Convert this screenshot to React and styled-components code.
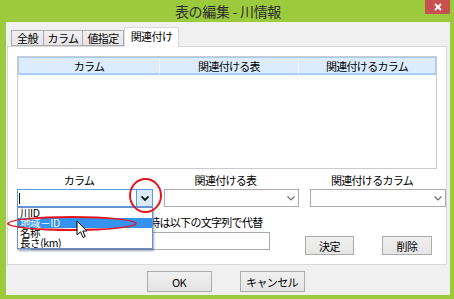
import React from "react";
import styled, { createGlobalStyle } from "styled-components";

const GlobalStyle = createGlobalStyle`
  html, body {
    margin: 0;
    padding: 0;
    background: #9bcb3c;
  }
  body {
    font-family: "Noto Sans CJK JP", "Liberation Sans", sans-serif;
    font-size: 11px;
    color: #000;
  }
`;

const Window = styled.div`
  position: relative;
  width: 454px;
  height: 299px;
  background: #9bcb3c;
  display: flex;
  flex-direction: column;
  overflow: hidden;
`;

const TitleBar = styled.div`
  height: 22px;
  display: flex;
  align-items: center;
  justify-content: center;
  position: relative;
`;

const Title = styled.div`
  font-size: 14px;
  color: #2d2d2d;
  letter-spacing: -0.3px;
  margin-left: 2px;
`;

const CloseButton = styled.div`
  position: absolute;
  top: 0;
  right: 4px;
  width: 25px;
  height: 14px;
  background: #c75050;
  display: flex;
  align-items: center;
  justify-content: center;
`;

const Client = styled.div`
  flex: 1;
  margin: 0 4px 4px 6px;
  padding: 0 3px 0 1px;
  background: #f0f0f0;
  display: flex;
  flex-direction: column;
`;

const TabStrip = styled.div`
  height: 19px;
  margin-top: 5px;
  padding-left: 4px;
  display: flex;
  align-items: flex-end;
  position: relative;
  z-index: 1;
`;

const Tab = styled.div`
  width: ${(p) => p.$w}px;
  height: ${(p) => (p.$active ? 20 : 16)}px;
  box-sizing: border-box;
  border: 1px solid ${(p) => (p.$active ? "#d9d9d9" : "#acacac")};
  border-bottom: ${(p) => (p.$active ? "none" : "1px solid #acacac")};
  border-left-width: ${(p) => (p.$first || p.$active ? 1 : 0)}px;
  background: ${(p) =>
    p.$active ? "#fff" : "linear-gradient(#f0f0f0, #e5e5e5)"};
  margin-bottom: ${(p) => (p.$active ? -1 : 0)}px;
  display: flex;
  align-items: center;
  justify-content: center;
  font-size: 11px;
  letter-spacing: -0.6px;
  padding-bottom: ${(p) => (p.$active ? 3 : 0)}px;
`;

const Panel = styled.div`
  height: 219px;
  box-sizing: border-box;
  background: #fff;
  border: 1px solid #d9d9d9;
  padding: 9px 0 0 9px;
  display: flex;
  flex-direction: column;
`;

const ListView = styled.div`
  width: 420px;
  height: 113px;
  box-sizing: border-box;
  border: 1px solid #c9cbd0;
  background: #fff;
`;

const ListHeader = styled.div`
  display: grid;
  grid-template-columns: 140px 139px 1fr;
  height: 18px;
  box-sizing: border-box;
  background: #dcecfd;
  border: 1px solid #a7cdf3;
  border-bottom-width: 2px;
`;

const HeaderCell = styled.div`
  display: flex;
  align-items: center;
  justify-content: center;
  font-size: 11px;
  letter-spacing: -0.7px;
  border-left: ${(p) => (p.$first ? "none" : "1px solid #f2f7fd")};
`;

const FieldGrid = styled.div`
  display: grid;
  grid-template-columns: 136px 135px 136px;
  column-gap: 11px;
  row-gap: 2px;
  margin-top: 5px;
`;

const FieldLabel = styled.div`
  height: 13px;
  line-height: 13px;
  text-align: center;
  padding-right: 12px;
  font-size: 11px;
  letter-spacing: -0.7px;
`;

const Combo = styled.div`
  height: 18px;
  box-sizing: border-box;
  border: 1px solid ${(p) => (p.$focus ? "#569de5" : "#acacac")};
  background: #fff;
  display: flex;
  align-items: stretch;
`;

const ComboText = styled.div`
  flex: 1;
  display: flex;
  align-items: center;
  padding-left: 1px;
`;

const Caret = styled.div`
  width: 1px;
  height: 11px;
  background: #000;
`;

const ComboArrow = styled.div`
  width: 15px;
  display: flex;
  align-items: center;
  justify-content: center;
  background: ${(p) => (p.$focus ? "#dbeaf9" : "transparent")};
  border-left: 1px solid ${(p) => (p.$focus ? "#569de5" : "transparent")};
`;

const CheckRow = styled.div`
  margin-top: 8px;
  height: 13px;
  display: flex;
  align-items: center;
  gap: 4px;
  padding-left: 76px;
  font-size: 11px;
  letter-spacing: -0.7px;
`;

const CheckBox = styled.div`
  width: 11px;
  height: 11px;
  box-sizing: border-box;
  border: 1px solid #707070;
  background: #fff;
`;

const EditRow = styled.div`
  margin-top: 4px;
  display: flex;
  align-items: flex-start;
  padding-left: 14px;
`;

const TextBox = styled.div`
  width: 239px;
  height: 18px;
  box-sizing: border-box;
  border: 1px solid #acacac;
  background: #fff;
`;

const Button = styled.div`
  width: ${(p) => p.$w}px;
  height: ${(p) => p.$h}px;
  box-sizing: border-box;
  border: 1px solid #acacac;
  background: linear-gradient(#f0f0f0, #e5e5e5);
  display: flex;
  align-items: center;
  justify-content: center;
  font-size: 11px;
  letter-spacing: -0.6px;
  margin-top: ${(p) => p.$top || 0}px;
  margin-left: ${(p) => p.$left || 0}px;
`;

const Footer = styled.div`
  padding-top: 6px;
  padding-right: 3px;
  display: flex;
  justify-content: center;
  gap: 28px;
`;

const DropList = styled.div`
  position: absolute;
  left: 17px;
  top: 207px;
  width: 136px;
  height: 42px;
  box-sizing: border-box;
  background: #fff;
  border: 1px solid #6f8fc4;
  box-shadow: 1px 2px 2px rgba(30, 60, 110, 0.45);
  overflow: hidden;
  z-index: 5;
`;

const DropItem = styled.div`
  height: 10px;
  line-height: 10px;
  padding-left: 2px;
  font-size: 10.5px;
  letter-spacing: -0.4px;
  white-space: nowrap;
  background: ${(p) => (p.$selected ? "#3393ee" : "transparent")};
  color: ${(p) => (p.$selected ? "#fff" : "#000")};
`;

const Ring = styled.div`
  position: absolute;
  left: ${(p) => p.$x}px;
  top: ${(p) => p.$y}px;
  width: ${(p) => p.$w}px;
  height: ${(p) => p.$h}px;
  box-sizing: border-box;
  border: 2px solid #e3141c;
  border-radius: 50%;
  z-index: 6;
  pointer-events: none;
`;

const Pointer = styled.svg`
  position: absolute;
  left: 76px;
  top: 220px;
  z-index: 7;
`;

function Chevron({ dark }) {
  return (
    <svg width="8" height="5" viewBox="0 0 8 5">
      <path
        d="M0.5 0.5 L4 4 L7.5 0.5"
        fill="none"
        stroke={dark ? "#111" : "#6d6d6d"}
        strokeWidth={dark ? 1.8 : 1.2}
      />
    </svg>
  );
}

export default function App() {
  return (
    <>
      <GlobalStyle />
      <Window>
        <TitleBar>
          <Title>表の編集 - 川情報</Title>
          <CloseButton>
            <svg width="8" height="8" viewBox="0 0 8 8">
              <path d="M1 1 L7 7 M7 1 L1 7" stroke="#fff" strokeWidth="1.8" />
            </svg>
          </CloseButton>
        </TitleBar>
        <Client>
          <TabStrip>
            <Tab $w={33} $first>全般</Tab>
            <Tab $w={39}>カラム</Tab>
            <Tab $w={41}>値指定</Tab>
            <Tab $w={55} $active>関連付け</Tab>
          </TabStrip>
          <Panel>
            <ListView>
              <ListHeader>
                <HeaderCell $first>カラム</HeaderCell>
                <HeaderCell>関連付ける表</HeaderCell>
                <HeaderCell>関連付けるカラム</HeaderCell>
              </ListHeader>
            </ListView>
            <FieldGrid>
              <FieldLabel>カラム</FieldLabel>
              <FieldLabel>関連付ける表</FieldLabel>
              <FieldLabel>関連付けるカラム</FieldLabel>
              <Combo $focus>
                <ComboText>
                  <Caret />
                </ComboText>
                <ComboArrow $focus>
                  <Chevron dark />
                </ComboArrow>
              </Combo>
              <Combo>
                <ComboText />
                <ComboArrow>
                  <Chevron />
                </ComboArrow>
              </Combo>
              <Combo>
                <ComboText />
                <ComboArrow>
                  <Chevron />
                </ComboArrow>
              </Combo>
            </FieldGrid>
            <CheckRow>
              <CheckBox />
              <span>値が無い時は以下の文字列で代替</span>
            </CheckRow>
            <EditRow>
              <TextBox />
              <Button $w={49} $h={19} $top={4} $left={35}>決定</Button>
              <Button $w={50} $h={19} $top={4} $left={28}>削除</Button>
            </EditRow>
          </Panel>
          <Footer>
            <Button $w={65} $h={21}>OK</Button>
            <Button $w={65} $h={21}>キャンセル</Button>
          </Footer>
        </Client>

        <DropList>
          <DropItem>川ID</DropItem>
          <DropItem $selected>地域－ID</DropItem>
          <DropItem>名称</DropItem>
          <DropItem>長さ(km)</DropItem>
        </DropList>
        <Ring $x={129} $y={178} $w={33} $h={35} />
        <Ring $x={7} $y={216} $w={130} $h={15} />
        <Pointer width="13" height="20" viewBox="0 0 13 20">
          <path
            d="M1 1 L1 15 L4.5 11.8 L7 17.5 L9.2 16.5 L6.8 11 L11 11 Z"
            fill="#fff"
            stroke="#000"
            strokeWidth="1"
            strokeLinejoin="round"
          />
        </Pointer>
      </Window>
    </>
  );
}
